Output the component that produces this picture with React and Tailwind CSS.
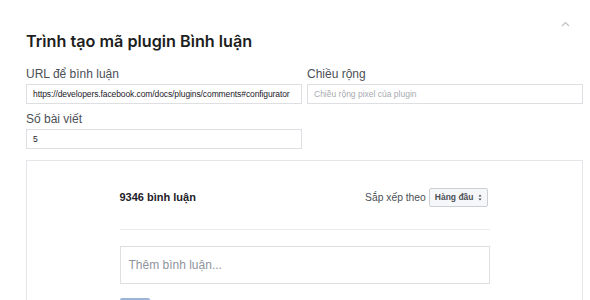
import React from "react"

const Field = ({ label, value, placeholder }) => (
  <div className="flex flex-col">
    <label className="text-[12px] leading-[16px] text-[#4b4f56] mb-[2px]">{label}</label>
    <input
      readOnly
      value={value}
      placeholder={placeholder}
      className="h-[20px] w-full border border-[#dddfe2] bg-white px-[6px] text-[8.5px] tracking-[-0.1px] text-[#1d2129] placeholder:text-[#a8abb1] placeholder:tracking-normal outline-none"
    />
  </div>
)

const App = () => {
  return (
    <div
      className="h-[300px] w-full overflow-hidden bg-white pl-[26px] pr-[7px]"
      style={{ fontFamily: "'Helvetica Neue', 'Liberation Sans', Arial, sans-serif" }}
    >
      <div className="flex h-[27px] items-end justify-end pr-[13px]">
        <svg width="9" height="6" viewBox="0 0 9 6" fill="none" stroke="#bcc0c4" strokeWidth="1.2">
          <path d="M1 5 L4.5 1.5 L8 5" />
        </svg>
      </div>
      <h1
        className="mt-[3px] text-[16.2px] leading-[22px] font-semibold text-[#1c1e21]"
        style={{ fontFamily: "Inter, 'Liberation Sans', sans-serif" }}
      >
        Trình tạo mã plugin Bình luận
      </h1>
      <div className="mt-[14px] grid grid-cols-2 gap-x-[5px] gap-y-[7px]">
        <Field label="URL để bình luận" value="https://developers.facebook.com/docs/plugins/comments#configurator" />
        <Field label="Chiều rộng" value="" placeholder="Chiều rộng pixel của plugin" />
        <Field label="Số bài viết" value="5" />
      </div>
      <div className="mt-[11px] h-[200px] border border-[#e4e6e9] pt-[27px]">
        <div className="mx-auto w-[370px]">
          <div className="flex h-[19px] items-center justify-between">
            <span className="text-[11px] font-bold text-[#1d2129]">9346 bình luận</span>
            <div className="flex items-center gap-[3px] pr-[2px]">
              <span className="text-[10.3px] text-[#4b4f56]">Sắp xếp theo</span>
              <div className="flex h-[19px] items-center gap-[4px] rounded-[2px] border border-[#ccd0d5] bg-[#f6f7f9] px-[5px]">
                <span className="text-[8.5px] font-bold text-[#4b4f56]">Hàng đầu</span>
                <svg width="4" height="7" viewBox="0 0 4 7" fill="#4b4f56">
                  <path d="M2 0.5 L3.6 2.6 H0.4 Z M2 6.5 L3.6 4.4 H0.4 Z" />
                </svg>
              </div>
            </div>
          </div>
          <div className="mt-[22px] border-t border-[#e9ebee]" />
          <div className="mt-[16px] flex h-[38px] items-center border border-[#dddfe2] px-[8px]">
            <span className="text-[12px] text-[#90949c]">Thêm bình luận...</span>
          </div>
          <div className="mt-[14px] h-[20px] w-[30px] rounded-[2px] bg-[#9cb4d8]" />
        </div>
      </div>
    </div>
  )
}

export default App
